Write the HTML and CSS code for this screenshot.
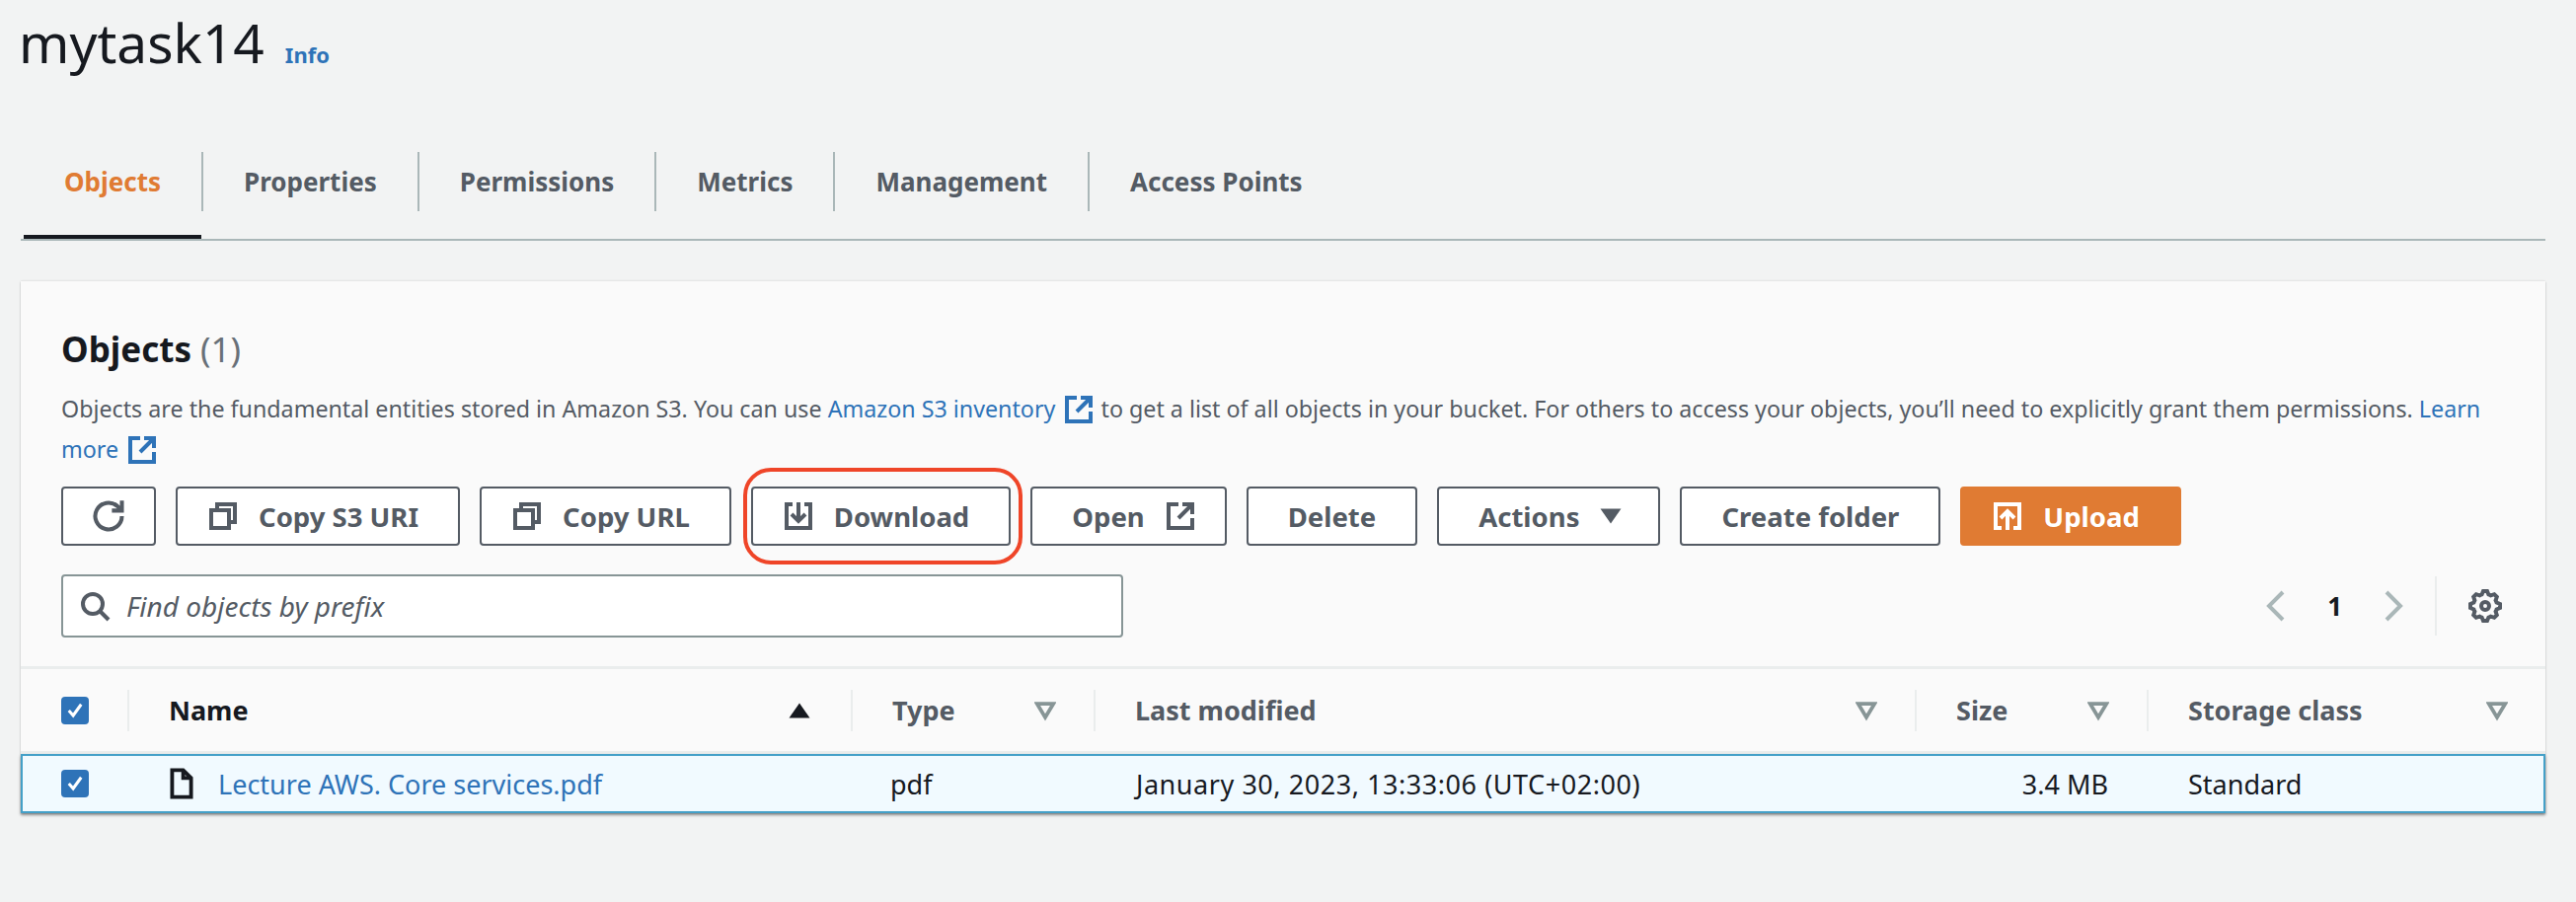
FILE: index.html
```html
<!DOCTYPE html>
<html lang="en">
<head>
  <meta charset="UTF-8" />
  <title>mytask14</title>
  <link rel="stylesheet" href="styles.css">
</head>
<body>

  <div class="page-title">
    <h1>mytask14</h1>
    <a class="info-link">Info</a>
  </div>

  <div class="tabs">
    <div class="tab active">Objects</div>
    <div class="tab">Properties</div>
    <div class="tab">Permissions</div>
    <div class="tab">Metrics</div>
    <div class="tab">Management</div>
    <div class="tab last">Access Points</div>
  </div>

  <div class="card">
    <div class="card-head">
      <h2>Objects <span class="count">(1)</span></h2>
      <p class="desc">Objects are the fundamental entities stored in Amazon S3. You can use <a>Amazon S3 inventory <svg class="icon ext" viewBox="0 0 16 16"><path d="M7 2H2v12h12V9M9 2h5v5M14 2L7 9"/></svg></a> to get a list of all objects in your bucket. For others to access your objects, you’ll need to explicitly grant them permissions. <a>Learn</a> <a>more <svg class="icon ext" viewBox="0 0 16 16"><path d="M7 2H2v12h12V9M9 2h5v5M14 2L7 9"/></svg></a></p>

      <div class="toolbar">
        <button class="btn btn-refresh"><svg class="icon" viewBox="0 0 16 16"><path d="M14 8a6 6 0 1 1-2-4.5L14 5.5M14 1v4.5H9.5"/></svg></button>
        <button class="btn btn-lead"><svg class="icon" viewBox="0 0 16 16"><path d="M5 5V2h9v9h-3M2 5h9v9H2z"/></svg>Copy S3 URI</button>
        <button class="btn btn-lead"><svg class="icon" viewBox="0 0 16 16"><path d="M5 5V2h9v9h-3M2 5h9v9H2z"/></svg>Copy URL</button>
        <button class="btn btn-lead callout"><svg class="icon" viewBox="0 0 16 16"><path d="M5 2H2v12h12V2h-3M8 1v9M4.5 7L8 10.5 11.5 7"/></svg>Download</button>
        <button class="btn btn-open">Open<svg class="icon" viewBox="0 0 16 16"><path d="M7 2H2v12h12V9M9 2h5v5M14 2L7 9"/></svg></button>
        <button class="btn">Delete</button>
        <button class="btn btn-actions">Actions<svg class="caret" viewBox="0 0 16 16"><path d="M1 3h14L8 13z"/></svg></button>
        <button class="btn">Create folder</button>
        <button class="btn btn-lead btn-primary"><svg class="icon" viewBox="0 0 16 16"><path d="M5 14H2V2h12v12h-3M8 15V6M4.5 9L8 5.5 11.5 9"/></svg>Upload</button>
      </div>

      <div class="filter-row">
        <div class="search">
          <svg class="icon" viewBox="0 0 16 16"><circle cx="7" cy="7" r="5"/><path d="M11 11l4 4"/></svg>
          <span>Find objects by prefix</span>
        </div>
        <div class="pager">
          <svg class="chev" viewBox="0 0 16 16"><path d="M11 1L4 8l7 7"/></svg>
          <span class="page-num">1</span>
          <svg class="chev" viewBox="0 0 16 16"><path d="M5 1l7 7-7 7"/></svg>
          <div class="settings">
            <svg class="icon" viewBox="-1 -1 18 18"><path d="M13.3 5.2l.6-1.8-1.3-1.3-1.8.6c-.4-.2-.7-.4-1.1-.5L9 .5H7l-.7 1.7c-.4.1-.7.3-1.1.5l-1.8-.6-1.3 1.3.6 1.8c-.2.4-.4.7-.5 1.1L.5 7v2l1.7.7c.1.4.3.7.5 1.1l-.6 1.8 1.3 1.3 1.8-.6c.4.2.7.4 1.1.5l.7 1.7h2l.7-1.7c.4-.1.7-.3 1.1-.5l1.8.6 1.3-1.3-.6-1.8c.2-.4.4-.7.5-1.1l1.7-.7V7l-1.7-.7c-.1-.4-.3-.7-.5-1.1z"/><circle cx="8" cy="8" r="2"/></svg>
          </div>
        </div>
      </div>
    </div>

    <div class="table-row table-header">
      <div class="cell cell-check"><span class="check"><svg viewBox="0 0 16 16"><path d="M3 8l3.5 4L13 3"/></svg></span></div>
      <div class="cell cell-name">Name <svg class="sort up" viewBox="0 0 16 16"><path d="M8 3l7 10H1z"/></svg></div>
      <div class="cell muted">Type <svg class="sort" viewBox="0 0 16 16"><path d="M2 3h12l-6 10z"/></svg></div>
      <div class="cell muted">Last modified <svg class="sort" viewBox="0 0 16 16"><path d="M2 3h12l-6 10z"/></svg></div>
      <div class="cell muted">Size <svg class="sort" viewBox="0 0 16 16"><path d="M2 3h12l-6 10z"/></svg></div>
      <div class="cell muted no-line">Storage class <svg class="sort" viewBox="0 0 16 16"><path d="M2 3h12l-6 10z"/></svg></div>
    </div>

    <div class="table-row selected">
      <div class="cell cell-check"><span class="check"><svg viewBox="0 0 16 16"><path d="M3 8l3.5 4L13 3"/></svg></span></div>
      <div class="cell cell-file">
        <svg class="file-icon" viewBox="0 0 16 20"><path d="M9 1.5H2v17h12V6.5zM9 1.5v5h5"/></svg>
        <a>Lecture AWS. Core services.pdf</a>
      </div>
      <div class="cell cell-type">pdf</div>
      <div class="cell cell-date">January 30, 2023, 13:33:06 (UTC+02:00)</div>
      <div class="cell cell-size">3.4 MB</div>
      <div class="cell">Standard</div>
    </div>
  </div>

</body>
</html>
```

FILE: styles.css
```css
/* Reset & base */
* {
  box-sizing: border-box;
}
body {
  font-family: "Noto Sans", "Open Sans", sans-serif;
  background: #f2f3f3;
  margin: 0;
  padding: 0 31px 0 21px;
  min-height: 100vh;
  color: #16191f;
  font-size: 28px;
}
a {
  color: #2e73b8;
}
svg {
  display: block;
  flex: none;
}
.icon {
  width: 32px;
  height: 32px;
  fill: none;
  stroke: currentColor;
  stroke-width: 2;
}

/* Page title */
.page-title {
  display: flex;
  align-items: baseline;
  gap: 21px;
  height: 154px;
  padding-top: 7px;
}
h1 {
  margin: 0 0 0 -2px;
  font-weight: 400;
  font-size: 55px;
  line-height: 72px;
}
.info-link {
  font-size: 22px;
  font-weight: 700;
}

/* Tabs */
.tabs {
  display: flex;
  align-items: flex-start;
  height: 90px;
  padding-left: 3px;
  border-bottom: 2px solid #aab7b8;
}
.tab {
  height: 60px;
  line-height: 60px;
  padding: 0 41px;
  font-size: 26px;
  color: #545b64;
  font-weight: 700;
  border-right: 2px solid #aab7b8;
  position: relative;
}
.tab.last {
  border-right: none;
}
.tab.active {
  color: #e07b33;
}
.tab.active::after {
  content: "";
  position: absolute;
  left: 0;
  right: 0;
  top: 84px;
  height: 4px;
  background: #16191f;
}

/* Card */
.card {
  margin-top: 41px;
  background: #fafafa;
  box-shadow: 0 1px 2px rgba(0,0,0,0.25), 0 -1px 2px rgba(0,0,0,0.05);
}
.card-head {
  padding: 46px 41px 29px 41px;
  border-bottom: 3px solid #eaeded;
}
h2 {
  margin: 0;
  font-size: 35px;
  line-height: 46px;
  font-weight: 700;
}
.count {
  font-weight: 400;
  color: #687078;
}
.desc {
  margin: 17px 0 0 0;
  font-size: 23.25px;
  line-height: 41px;
  color: #545b64;
}
.ext {
  display: inline-block;
  vertical-align: -8px;
  margin-left: 2px;
}

/* Toolbar buttons */
.toolbar {
  display: flex;
  gap: 20px;
  margin-top: 17px;
}
.btn {
  display: flex;
  align-items: center;
  gap: 20px;
  height: 60px;
  padding: 0 40px;
  background: #fff;
  border: 2px solid #545b64;
  border-radius: 4px;
  color: #545b64;
  font: inherit;
  font-size: 27.5px;
  font-weight: 700;
  position: relative;
}
.btn-lead {
  padding-left: 30px;
}
.btn-refresh {
  width: 96px;
  padding: 0;
  justify-content: center;
}
.btn-refresh .icon {
  width: 36px;
  height: 36px;
  stroke-width: 1.8;
}
.btn-open {
  padding-right: 29px;
}
.btn-actions {
  padding-right: 36px;
}
.btn-primary {
  background: #e07b33;
  border-color: #e07b33;
  color: #fff;
}
.callout::after {
  content: "";
  position: absolute;
  inset: -21px -14px -21px -10px;
  border: 4px solid #ef4528;
  border-radius: 28px;
}
.caret {
  width: 24px;
  height: 24px;
  fill: #545b64;
}

/* Search & pagination */
.filter-row {
  display: flex;
  justify-content: space-between;
  align-items: center;
  margin-top: 29px;
}
.search {
  display: flex;
  align-items: center;
  gap: 16px;
  width: 1076px;
  height: 64px;
  padding-left: 16px;
  background: #fff;
  border: 2px solid #879596;
  border-radius: 4px;
  color: #545b64;
  font-size: 28px;
  font-style: italic;
}
.pager {
  display: flex;
  align-items: center;
  height: 60px;
  gap: 35px;
  margin-right: 2px;
  font-weight: 700;
}
.chev {
  width: 32px;
  height: 32px;
  fill: none;
  stroke: #aab7b8;
  stroke-width: 2;
}
.page-num {
  font-size: 26px;
}
.settings {
  display: flex;
  align-items: center;
  height: 60px;
  margin-left: -8px;
  padding-left: 31px;
  border-left: 2px solid #eaeded;
  color: #545b64;
}
.settings .icon {
  width: 36px;
  height: 36px;
}

/* Table */
.table-row {
  display: grid;
  grid-template-columns: 110px 733px 246px 832px 235px 1fr;
  align-items: center;
}
.table-header {
  height: 86px;
  font-weight: 700;
  font-size: 27px;
  border-bottom: 3px solid #eaeded;
}
.table-header .cell {
  display: flex;
  align-items: center;
  justify-content: space-between;
  height: 42px;
  padding: 0 38px 0 40px;
  border-right: 2px solid #eaeded;
}
.table-header .cell-check {
  padding: 0 0 0 41px;
}
.table-header .no-line {
  border-right: none;
}
.muted {
  color: #545b64;
}
.sort {
  width: 22px;
  height: 22px;
  fill: none;
  stroke: #879596;
  stroke-width: 2.8;
}
.sort.up {
  fill: #16191f;
  stroke: none;
  width: 24px;
  height: 24px;
  margin-right: 2px;
}
.check {
  display: flex;
  align-items: center;
  justify-content: center;
  width: 28px;
  height: 28px;
  border-radius: 4px;
  background: #2e73b8;
}
.check svg {
  width: 20px;
  height: 20px;
  fill: none;
  stroke: #fff;
  stroke-width: 2.4;
}
.selected {
  height: 60px;
  background: #f1faff;
  box-shadow: inset 0 0 0 2px #44a0c8, 0 2px 3px rgba(0,0,0,0.35);
  font-size: 27px;
}
.selected .cell {
  padding-left: 40px;
}
.selected .cell-check {
  padding-left: 41px;
}
.selected .cell-type {
  padding-left: 38px;
}
.selected .cell-date {
  padding-left: 41px;
  letter-spacing: 0.55px;
}
.cell-file {
  display: flex;
  align-items: center;
  gap: 24px;
}
.file-icon {
  width: 26px;
  height: 32px;
  fill: none;
  stroke: #16191f;
  stroke-width: 2.4;
}
.selected .cell-size {
  padding-right: 41px;
  text-align: right;
}
```
